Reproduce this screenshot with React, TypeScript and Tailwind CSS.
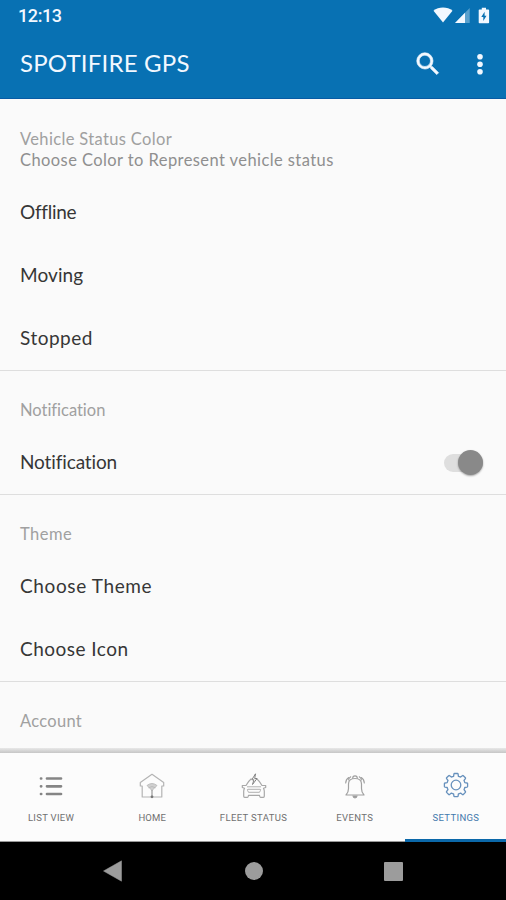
import React from 'react';

type TabProps = {
  label: string;
  active?: boolean;
  spacing: string;
  children: React.ReactNode;
};

const sections = [
  {
    title: 'Vehicle Status Color',
    titleSpacing: 'tracking-[0.35px]',
    subtitle: 'Choose Color to Represent vehicle status',
    rows: [
      { label: 'Offline', spacing: 'tracking-[-0.25px]' },
      { label: 'Moving', spacing: 'tracking-[0.1px]' },
      { label: 'Stopped', spacing: 'tracking-[0.5px]' }
    ]
  },
  {
    title: 'Notification',
    titleSpacing: 'tracking-[-0.02px]',
    rows: [{ label: 'Notification', spacing: 'tracking-[-0.12px]', toggle: true }]
  },
  {
    title: 'Theme',
    titleSpacing: 'tracking-[0.5px]',
    rows: [
      { label: 'Choose Theme', spacing: 'tracking-[0.62px]' },
      { label: 'Choose Icon', spacing: 'tracking-[0.48px]' }
    ]
  },
  { title: 'Account', titleSpacing: 'tracking-[0.3px]', rows: [] }
];

function StatusBar() {
  return (
    <div className="flex h-8 items-center justify-between pl-[18px] pr-4 font-[Roboto,sans-serif]">
      <span className="text-[18px] leading-8 font-medium tracking-[-0.4px]">12:13</span>
      <svg width="58" height="18" viewBox="0 0 58 18" fill="currentColor">
        <path d="M1.500 3.800C6.500-.6 15.500-.6 20.500 3.800L11 15.500Z" />
        <path d="M37.700 1V16H23Z" opacity=".35" />
        <path d="M33 5.800V16H23Z" />
        <path
          fillRule="evenodd"
          d="M47.500 2.500h2.300V.7h4.200v1.800h2.300q.8 0 .8.800v12.200q0 .8-.8.800h-8.800q-.8 0-.8-.8V3.300q0-.8.800-.8ZM52.600 4.700 49.300 10h2v4l3.200-5.300h-1.900Z"
        />
      </svg>
    </div>
  );
}

function AppBar() {
  return (
    <header className="flex h-[67px] items-center border-b border-[#075ba5] pb-[3px] pl-5 pr-[22px]">
      <h1 className="flex-1 pb-px text-[24px] leading-8 tracking-[0.2px]">SPOTIFIRE GPS</h1>
      <button type="button" aria-label="Search" className="mr-[33px]">
        <svg width="30" height="30" viewBox="0 0 24 24" fill="currentColor" stroke="currentColor" strokeWidth=".5">
          <path d="M15.500 14h-.79l-.28-.27A6.470 6.470 0 0 0 16 9.500 6.500 6.500 0 1 0 9.500 16c1.610 0 3.090-.59 4.230-1.570l.27.28v.79l5 4.990L20.490 19l-4.990-5zm-6 0C7.010 14 5 11.990 5 9.500S7.010 5 9.500 5 14 7.010 14 9.500 11.990 14 9.500 14z" />
        </svg>
      </button>
      <button type="button" aria-label="More options">
        <svg width="8" height="22" viewBox="0 0 8 22" fill="currentColor">
          <circle cx="4" cy="3.700" r="2.800" />
          <circle cx="4" cy="11.200" r="2.800" />
          <circle cx="4" cy="18.700" r="2.800" />
        </svg>
      </button>
    </header>
  );
}

function Toggle() {
  return (
    <button type="button" role="switch" aria-checked="true" className="flex h-[18px] w-[39px] items-center justify-end rounded-full bg-[#dedede]">
      <span className="size-[25px] shrink-0 rounded-full bg-[#898989] shadow-[0_1px_2px_rgba(0,0,0,0.35)]" />
    </button>
  );
}

function Tab({ label, active, spacing, children }: TabProps) {
  return (
    <button
      type="button"
      className={`flex flex-1 flex-col items-center border-b-[3px] pt-[17px] pl-px ${
        active ? 'border-[#0b68a9] text-[#6791bd]' : 'border-transparent text-[#858585]'
      }`}
    >
      <span className="flex h-8 items-center justify-center">{children}</span>
      <span className={`mt-2.5 text-[9.500px] leading-3 whitespace-nowrap font-[Roboto,sans-serif] ${spacing} ${active ? 'text-[#4379ac]' : 'text-[#707070]'}`}>
        {label}
      </span>
    </button>
  );
}

function BottomTabs() {
  return (
    <nav className="flex h-[89px] shrink-0 bg-[#fcfcfc] shadow-[inset_0_-1px_0_#999]">
      <Tab label="LIST VIEW" spacing="tracking-[0.3px]">
        <svg width="24" height="20" viewBox="0 0 24 20" stroke="currentColor" strokeWidth="2.700" strokeLinecap="round">
          <path d="M2 2.500h.2M2 10.300h.2M2 18h.2M8 2.500h14M8 10.300h14M8 18h14" />
        </svg>
      </Tab>
      <Tab label="HOME" spacing="tracking-[0.2px]">
        <svg width="26" height="26" viewBox="0 0 26 26" fill="none" stroke="#b4b4b4" strokeWidth="1.200">
          <path d="M3.200 13H1.300V9.500L13 1.300l11.700 8.200V13h-1.900v11H3.200Z" strokeLinejoin="round" />
          <path d="M8 12.500q5-4 10 0l-5 5Z" fill="#d0d0d0" strokeWidth=".8" />
          <path d="M9.500 14.800q3.500-2.500 7 0" strokeWidth=".8" />
          <path d="M13 17v6" stroke="#999" />
          <circle cx="13" cy="23.800" r="1.400" fill="#777" stroke="none" />
        </svg>
      </Tab>
      <Tab label="FLEET STATUS" spacing="tracking-[0.35px]">
        <svg width="26" height="26" viewBox="0 0 26 26" fill="none" stroke="#a8a8a8" strokeWidth="1.200" strokeLinejoin="round">
          <path d="M10.500 5.500Q8 7.500 5 12.500H1.300v2l2.200.8q-1 2-.8 4v4q0 1 1 1h2.800q.8 0 1-2h11q.2 2 1 2h2.800q1 0 1-1v-4q.2-2-.8-4l2.200-.8v-2H21Q18 7.500 15.500 5.500" />
          <path d="M6 13.800h14M7 16.300h12q1 0 .5 1l-1 2h-11l-1-2q-.5-1 .5-1Z" strokeWidth=".9" />
          <path d="m14.500.8-3.700 6h2.100L11.500 11.500l4.500-6h-2.300Z" stroke="#777" strokeWidth=".9" />
        </svg>
      </Tab>
      <Tab label="EVENTS" spacing="tracking-[0.35px]">
        <svg width="22" height="26" viewBox="0 0 22 26" fill="none" stroke="#a0a0a0" strokeWidth="1.200" strokeLinecap="round">
          <path d="M2 22c2-2 2.500-3.500 2.500-6.500V11c0-3.500 2.500-5.500 6.500-5.500s6.500 2 6.500 5.500v4.500c0 3 .5 4.500 2.500 6.500Z" strokeLinejoin="round" />
          <path d="M8.700 5.300c0-3.200 4.600-3.200 4.600 0" />
          <path d="M9 23c.4 2.500 3.600 2.500 4 0Z" fill="#999" />
          <path d="M1.700 10q0-3.500 3-5.500M4.500 7q.4-1.800 2.200-3.200M20.300 10q0-3.500-3-5.500M17.500 7q-.4-1.800-2.200-3.200" strokeWidth="1.100" />
        </svg>
      </Tab>
      <Tab label="SETTINGS" spacing="tracking-[0.35px]" active>
        <svg className="mb-[3px]" width="26" height="26" viewBox="0 0 26 26" fill="none" stroke="currentColor" strokeWidth="1.300" strokeLinejoin="round">
          <circle cx="13" cy="13" r="4.800" />
          <path d="M11.500 1.500h3q.5 0 .6.600l.3 2.200q1 .2 2.200.8l1.800-1.400q.5-.4.900 0l2.100 2.100q.4.400 0 .9l-1.400 1.800q.6 1.200.8 2.200l2.200.3q.6.100.6.600v3q0 .5-.6.600l-2.200.3q-.2 1-.8 2.200l1.400 1.800q.4.500 0 .9l-2.100 2.100q-.4.400-.9 0l-1.800-1.400q-1.200.6-2.200.8l-.3 2.200q-.1.600-.6.600h-3q-.5 0-.6-.6l-.3-2.200q-1-.2-2.200-.8l-1.800 1.400q-.5.400-.9 0l-2.100-2.100q-.4-.4 0-.9L5 17.700q-.6-1.200-.8-2.200L2 15.200q-.6-.1-.6-.6v-3q0-.5.600-.6l2.200-.3q.2-1 .8-2.200L3.600 6.700q-.4-.5 0-.9l2.100-2.100q.4-.4.900 0l1.800 1.400q1.200-.6 2.200-.8l.3-2.200q.1-.6.600-.6Z" />
        </svg>
      </Tab>
    </nav>
  );
}

function SystemNav() {
  return (
    <div className="flex h-[58px] shrink-0 items-center justify-between bg-black px-[103px] text-[#9c9c9c]">
      <svg width="20" height="22" viewBox="0 0 20 22" fill="currentColor">
        <path d="M.5 11 18.500.8v20.400Z" stroke="currentColor" strokeLinejoin="round" strokeWidth=".5" />
      </svg>
      <span className="size-[18px] rounded-full bg-[#9c9c9c]" />
      <span className="size-[19px] rounded-[1px] bg-[#9c9c9c]" />
    </div>
  );
}

export default function App() {
  return (
    <div className="flex h-[900px] w-[506px] flex-col overflow-hidden bg-[#fafafa] font-[Lato,sans-serif]">
      <div className="bg-[#0871b3] text-[#f2f8ff]">
        <StatusBar />
        <AppBar />
      </div>

      <main className="min-h-0 flex-1 overflow-hidden pt-px">
        {sections.map((section) => (
          <section key={section.title} className="border-b border-[#dedede] last:border-b-0">
            <div className="pt-[29px] pb-2.5 pl-5 text-[16.500px] leading-[21px]">
              <h2 className={`text-[#a0a0a0] ${section.titleSpacing}`}>{section.title}</h2>
              {section.subtitle && <p className="tracking-[0.42px] text-[#8f8f8f]">{section.subtitle}</p>}
            </div>
            {section.rows.map((row) => (
              <div key={row.label} className="flex h-[63px] items-center justify-between pl-5 pr-[23px] text-[19px] text-[#363636]">
                <span className={row.spacing}>{row.label}</span>
                {row.toggle && <Toggle />}
              </div>
            ))}
          </section>
        ))}
      </main>

      <div className="h-[5px] shrink-0 bg-linear-to-b from-[#e8e8e8] to-[#c6c6c6]" />
      <BottomTabs />
      <SystemNav />
    </div>
  );
}
